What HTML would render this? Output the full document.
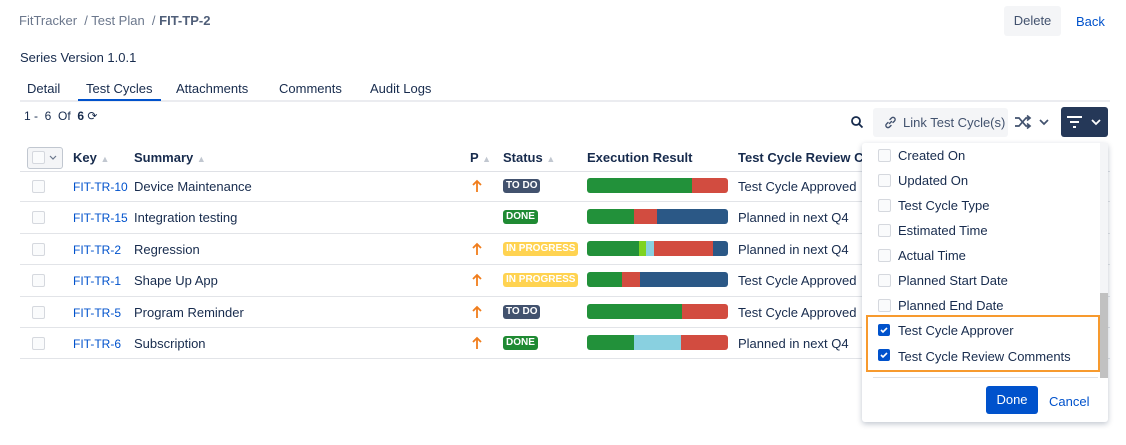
<!DOCTYPE html><html><head><style>
body{margin:0;width:1126px;height:445px;background:#fff;font-family:"Liberation Sans",sans-serif;font-size:13px;color:#172b4d;position:relative;overflow:hidden}
.a{position:absolute;white-space:nowrap}
.cb{position:absolute;width:11px;height:11px;border:1px solid #d5d8de;border-radius:2px;background:#fafbfc}
.ck{position:absolute;width:12px;height:12px;border-radius:2px;background:#0052cc}
.bar{position:absolute;left:587px;width:141px;height:15px;border-radius:3px;overflow:hidden;display:flex}
.bar i{display:block;height:100%}
.g{background:#22913a}.r{background:#d24c40}.b{background:#2b5886}.lg{background:#7ed321}.lb{background:#89d0e0}
.lz{position:absolute;height:14px;line-height:14px;padding:0 3px;border-radius:3px;font-size:10px;font-weight:bold;color:#fff}
.ln{position:absolute;left:20px;width:1090px;height:1px;background:#e2e4e8}
.up{position:absolute;left:472px}
.k{color:#0052cc;font-size:12px}
.it{position:absolute;left:898px}
.s{color:#c1c7d0;font-size:9px}
</style></head><body>
<div class="a" style="left:19px;top:13px;color:#6b778c">FitTracker &nbsp;/ Test Plan &nbsp;/ <b style="color:#505f79">FIT-TP-2</b></div>
<div class="a" style="left:1004px;top:6px;width:57px;height:30px;background:#f4f5f7;border-radius:3px;line-height:30px;text-align:center;color:#42526e">Delete</div>
<div class="a" style="left:1076px;top:14px;color:#0052cc">Back</div>
<div class="a" style="left:20px;top:50px">Series Version 1.0.1</div>
<div class="a" style="left:27px;top:81px">Detail</div>
<div class="a" style="left:86px;top:81px">Test Cycles</div>
<div class="a" style="left:176px;top:81px">Attachments</div>
<div class="a" style="left:279px;top:81px">Comments</div>
<div class="a" style="left:370px;top:81px">Audit Logs</div>
<div class="a" style="left:20px;top:100px;width:1090px;height:2px;background:#ebecf0"></div>
<div class="a" style="left:78px;top:99px;width:83px;height:2px;background:#0052cc"></div>
<div class="a" style="left:24px;top:109px;font-size:12px">1 - &nbsp;6 &nbsp;Of &nbsp;<b>6</b> ⟳</div>
<svg class="a" style="left:850px;top:115px" width="14" height="14" viewBox="0 0 14 14"><circle cx="6" cy="6" r="4" fill="none" stroke="#172b4d" stroke-width="1.8"/><path d="M9 9l3.5 3.5" stroke="#172b4d" stroke-width="1.8"/></svg>
<div class="a" style="left:873px;top:108px;width:135px;height:29px;background:#f4f5f7;border-radius:3px"></div>
<svg class="a" style="left:884px;top:116px" width="13" height="13" viewBox="0 0 13 13"><path d="M5.5 7.5l2-2M4 6.5l-1.5 1.5a2 2 0 003 3L7 9.5M9 6.5l1.5-1.5a2 2 0 00-3-3L6 3.5" fill="none" stroke="#42526e" stroke-width="1.4" stroke-linecap="round"/></svg>
<div class="a" style="left:903px;top:115px;color:#42526e">Link Test Cycle(s)</div>
<svg class="a" style="left:1014px;top:114px" width="40" height="16" viewBox="0 0 40 16"><path d="M1 4h4l7 8h4M1 12h4l7-8h4M13 1.5l3 2.5-3 2.5M13 9.5l3 2.5-3 2.5" fill="none" stroke="#42526e" stroke-width="1.7"/><path d="M26 6l4 4 4-4" fill="none" stroke="#42526e" stroke-width="1.7"/></svg>
<div class="a" style="left:1061px;top:107px;width:47px;height:30px;background:#253858;border-radius:3px"></div>
<svg class="a" style="left:1066px;top:114px" width="40" height="16" viewBox="0 0 40 16"><path d="M1 3h15M4 8h9M7 13h3" stroke="#fff" stroke-width="2"/><path d="M26 6l4 4 4-4" fill="none" stroke="#fff" stroke-width="1.8"/></svg>
<div class="a" style="left:27px;top:147px;width:34px;height:20px;border:1px solid #c1c7d0;border-radius:3px;background:#f4f5f7"></div>
<div class="cb" style="left:32px;top:151px"></div>
<svg class="a" style="left:49px;top:155px" width="8" height="6"><path d="M1 1l3 3 3-3" fill="none" stroke="#6b778c" stroke-width="1.2"/></svg>
<div class="a" style="left:73px;top:150px;font-weight:bold">Key <span class="s">▲</span></div>
<div class="a" style="left:134px;top:150px;font-weight:bold">Summary <span class="s">▲</span></div>
<div class="a" style="left:470px;top:150px;font-weight:bold">P <span class="s">▲</span></div>
<div class="a" style="left:503px;top:150px;font-weight:bold">Status <span class="s">▲</span></div>
<div class="a" style="left:587px;top:150px;font-weight:bold">Execution Result</div>
<div class="a" style="left:738px;top:150px;font-weight:bold">Test Cycle Review Co</div>
<div class="ln" style="top:171px;background:#dfe1e6"></div>
<div class="ln" style="top:201px"></div><div class="ln" style="top:233px"></div><div class="ln" style="top:264px"></div><div class="ln" style="top:296px"></div><div class="ln" style="top:327px"></div><div class="ln" style="top:358px"></div>

<svg width="0" height="0" style="position:absolute"><defs><symbol id="up" viewBox="0 0 10 14"><path d="M5 13V2M1 6l4-4 4 4" fill="none" stroke="#f07d1c" stroke-width="1.8"/></symbol></defs></svg>

<div class="cb" style="left:32px;top:180px"></div><div class="a k" style="left:73px;top:180px">FIT-TR-10</div><div class="a" style="left:134px;top:179px">Device Maintenance</div><svg class="up" style="top:179px" width="10" height="14"><use href="#up"/></svg><div class="lz" style="left:503px;top:179px;background:#42526e">TO DO</div><div class="bar" style="top:178px"><i class="g" style="width:105px"></i><i class="r" style="flex:1"></i></div><div class="a" style="left:738px;top:179px">Test Cycle Approved</div>

<div class="cb" style="left:32px;top:211px"></div><div class="a k" style="left:73px;top:211px">FIT-TR-15</div><div class="a" style="left:134px;top:210px">Integration testing</div><div class="lz" style="left:503px;top:210px;background:#1f8a33">DONE</div><div class="bar" style="top:209px"><i class="g" style="width:47px"></i><i class="r" style="width:23px"></i><i class="b" style="flex:1"></i></div><div class="a" style="left:738px;top:210px">Planned in next Q4</div>

<div class="cb" style="left:32px;top:243px"></div><div class="a k" style="left:73px;top:243px">FIT-TR-2</div><div class="a" style="left:134px;top:242px">Regression</div><svg class="up" style="top:242px" width="10" height="14"><use href="#up"/></svg><div class="lz" style="left:503px;top:242px;background:#ffd351">IN PROGRESS</div><div class="bar" style="top:241px"><i class="g" style="width:52px"></i><i class="lg" style="width:7px"></i><i class="lb" style="width:8px"></i><i class="r" style="width:59px"></i><i class="b" style="flex:1"></i></div><div class="a" style="left:738px;top:242px">Planned in next Q4</div>

<div class="cb" style="left:32px;top:274px"></div><div class="a k" style="left:73px;top:274px">FIT-TR-1</div><div class="a" style="left:134px;top:273px">Shape Up App</div><svg class="up" style="top:273px" width="10" height="14"><use href="#up"/></svg><div class="lz" style="left:503px;top:273px;background:#ffd351">IN PROGRESS</div><div class="bar" style="top:272px"><i class="g" style="width:35px"></i><i class="r" style="width:18px"></i><i class="b" style="flex:1"></i></div><div class="a" style="left:738px;top:273px">Test Cycle Approved</div>

<div class="cb" style="left:32px;top:306px"></div><div class="a k" style="left:73px;top:306px">FIT-TR-5</div><div class="a" style="left:134px;top:305px">Program Reminder</div><svg class="up" style="top:305px" width="10" height="14"><use href="#up"/></svg><div class="lz" style="left:503px;top:305px;background:#42526e">TO DO</div><div class="bar" style="top:304px"><i class="g" style="width:95px"></i><i class="r" style="flex:1"></i></div><div class="a" style="left:738px;top:305px">Test Cycle Approved</div>

<div class="cb" style="left:32px;top:337px"></div><div class="a k" style="left:73px;top:337px">FIT-TR-6</div><div class="a" style="left:134px;top:336px">Subscription</div><svg class="up" style="top:336px" width="10" height="14"><use href="#up"/></svg><div class="lz" style="left:503px;top:336px;background:#1f8a33">DONE</div><div class="bar" style="top:335px"><i class="g" style="width:47px"></i><i class="lb" style="width:47px"></i><i class="r" style="flex:1"></i></div><div class="a" style="left:738px;top:336px">Planned in next Q4</div>

<div class="a" style="left:862px;top:143px;width:246px;height:279px;background:#fff;border-radius:3px;box-shadow:0 2px 6px rgba(9,30,66,.25)"></div>
<div class="a" style="left:1100px;top:143px;width:8px;height:235px;background:#f4f5f7"></div>
<div class="a" style="left:1100px;top:293px;width:8px;height:85px;background:#c1c1c1"></div>
<div class="cb" style="left:878px;top:149px"></div><div class="it" style="top:148px">Created On</div>
<div class="cb" style="left:878px;top:174px"></div><div class="it" style="top:173px">Updated On</div>
<div class="cb" style="left:878px;top:199px"></div><div class="it" style="top:198px">Test Cycle Type</div>
<div class="cb" style="left:878px;top:224px"></div><div class="it" style="top:223px">Estimated Time</div>
<div class="cb" style="left:878px;top:249px"></div><div class="it" style="top:248px">Actual Time</div>
<div class="cb" style="left:878px;top:274px"></div><div class="it" style="top:273px">Planned Start Date</div>
<div class="cb" style="left:878px;top:299px"></div><div class="it" style="top:298px">Planned End Date</div>
<div class="a" style="left:866px;top:315px;width:230px;height:53px;border:2px solid #f79a2e"></div>
<div class="ck" style="left:878px;top:324px"><svg width="12" height="12"><path d="M3 6l2 2 4-4" fill="none" stroke="#fff" stroke-width="1.6"/></svg></div><div class="it" style="top:323px">Test Cycle Approver</div>
<div class="ck" style="left:878px;top:349px"><svg width="12" height="12"><path d="M3 6l2 2 4-4" fill="none" stroke="#fff" stroke-width="1.6"/></svg></div><div class="it" style="top:349px">Test Cycle Review Comments</div>
<div class="a" style="left:873px;top:377px;width:225px;height:1px;background:#dfe1e6"></div>
<div class="a" style="left:986px;top:386px;width:52px;height:28px;background:#0052cc;border-radius:3px;color:#fff;line-height:28px;text-align:center">Done</div>
<div class="a" style="left:1049px;top:394px;color:#0052cc">Cancel</div>
</body></html>
